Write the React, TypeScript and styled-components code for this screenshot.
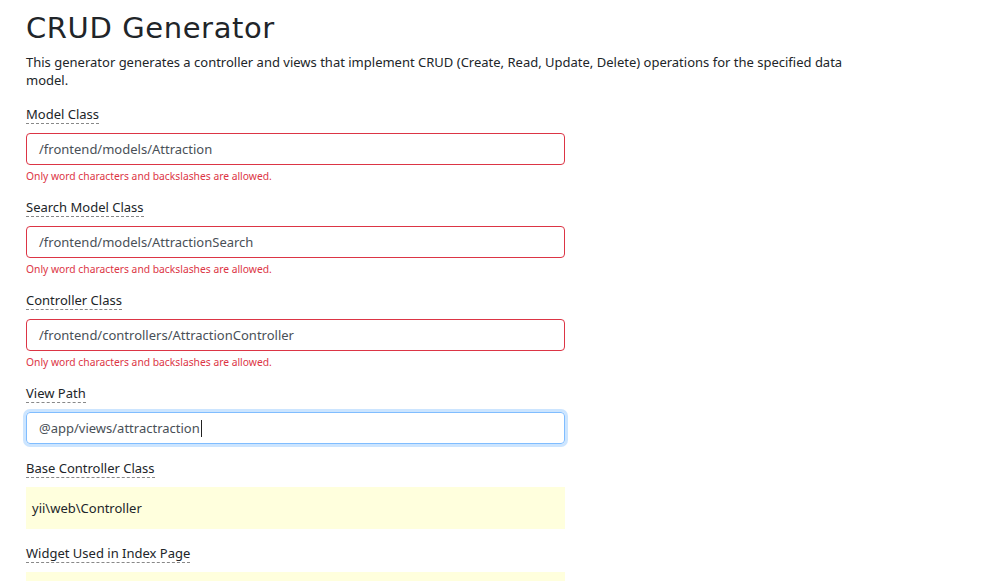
import React from "react";
import styled, { createGlobalStyle } from "styled-components";

const Global = createGlobalStyle`
  html, body { margin: 0; padding: 0; background: #fff; }
  body { font-family: "Noto Sans", "DejaVu Sans", sans-serif; color: #212529; }
`;

const Page = styled.div`
  padding: 8px 0 0 26px;
  width: 830px;
`;

const Title = styled.h1`
  margin: 0;
  font-family: "DejaVu Sans", "Noto Sans", sans-serif;
  font-size: 29px;
  letter-spacing: 0.6px;
  font-weight: 400;
  line-height: 40px;
  color: #212529;
`;

const Lead = styled.p`
  margin: 5px 0 16px;
  font-size: 13px;
  line-height: 18px;
  color: #212529;
`;

const Group = styled.div`
  display: flex;
  flex-direction: column;
  align-items: flex-start;
  margin-bottom: 15px;
  width: 539px;
`;

const Label = styled.label`
  display: block;
  font-size: 13px;
  line-height: 18px;
  border-bottom: 1px dashed #888;
  margin-bottom: 9px;
  color: #212529;
`;

const Box = styled.div<{ $state: "error" | "focus" | "normal" }>`
  box-sizing: border-box;
  align-self: stretch;
  height: 32px;
  display: flex;
  align-items: center;
  padding: 0 12px;
  border-radius: 4px;
  font-size: 13px;
  color: #495057;
  border: 1px solid
    ${(p) => (p.$state === "error" ? "#dc3545" : p.$state === "focus" ? "#80bdff" : "#ced4da")};
  box-shadow: ${(p) => (p.$state === "focus" ? "0 0 0 3px rgba(0,123,255,0.2)" : "none")};
`;

const Caret = styled.span`
  display: inline-block;
  width: 1px;
  height: 17px;
  background: #222;
  margin-left: 1px;
`;

const Error = styled.div`
  margin-top: 5px;
  font-size: 10.3px;
  line-height: 13px;
  color: #dc3545;
`;

const Sticky = styled.div`
  box-sizing: border-box;
  align-self: stretch;
  height: 42px;
  display: flex;
  align-items: center;
  padding: 0 6px;
  background: #ffffdd;
  font-size: 13px;
  color: #212529;
`;

const ERR = "Only word characters and backslashes are allowed.";

const errorFields = [
  { label: "Model Class", value: "/frontend/models/Attraction" },
  { label: "Search Model Class", value: "/frontend/models/AttractionSearch" },
  { label: "Controller Class", value: "/frontend/controllers/AttractionController" },
];

export default function App() {
  return (
    <>
      <Global />
      <Page>
        <Title>CRUD Generator</Title>
        <Lead>
          This generator generates a controller and views that implement CRUD (Create, Read, Update, Delete)
          operations for the specified data model.
        </Lead>
        {errorFields.map((f) => (
          <Group key={f.label}>
            <Label>{f.label}</Label>
            <Box $state="error">{f.value}</Box>
            <Error>{ERR}</Error>
          </Group>
        ))}
        <Group>
          <Label>View Path</Label>
          <Box $state="focus">
            @app/views/attractraction
            <Caret />
          </Box>
        </Group>
        <Group>
          <Label>Base Controller Class</Label>
          <Sticky>yii\web\Controller</Sticky>
        </Group>
        <Group>
          <Label>Widget Used in Index Page</Label>
          <Sticky />
        </Group>
      </Page>
    </>
  );
}
